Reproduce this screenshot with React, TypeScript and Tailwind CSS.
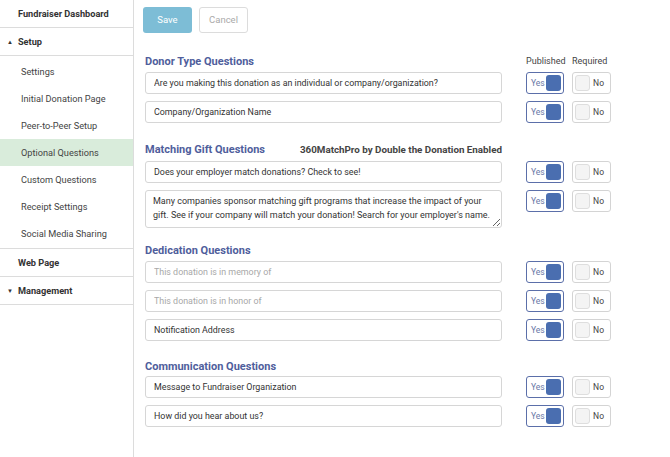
import React from "react";

const font = { fontFamily: "Roboto, 'Liberation Sans', sans-serif" };

const subItems = [
  "Settings",
  "Initial Donation Page",
  "Peer-to-Peer Setup",
  "Optional Questions",
  "Custom Questions",
  "Receipt Settings",
  "Social Media Sharing",
];

function Sidebar() {
  return (
    <aside className="w-[134px] shrink-0 border-r border-[#dcdcdc] min-h-screen text-[9.2px] text-[#333]">
      <div className="h-[28px] flex items-center pl-[18px] font-bold border-b border-[#dcdcdc]">
        Fundraiser Dashboard
      </div>
      <div className="h-[28px] flex items-center pl-[7px] font-bold border-b border-[#dcdcdc]">
        <span className="text-[6px] mr-[5px]">▲</span>Setup
      </div>
      <div className="pt-[2px] pb-[1px] border-b border-[#dcdcdc]">
        {subItems.map((s) => (
          <div
            key={s}
            className={`h-[27px] flex items-center pl-[21px] text-[#444] ${
              s === "Optional Questions" ? "bg-[#d9ecdb]" : ""
            }`}
          >
            {s}
          </div>
        ))}
      </div>
      <div className="h-[28px] flex items-center pl-[18px] font-bold border-b border-[#dcdcdc]">
        Web Page
      </div>
      <div className="h-[28px] flex items-center pl-[7px] font-bold border-b border-[#dcdcdc]">
        <span className="text-[6px] mr-[5px]">▼</span>Management
      </div>
    </aside>
  );
}

function Toggles() {
  return (
    <div className="flex gap-[8px] shrink-0">
      <div className="w-[38px] h-[22px] border border-[#5b6fa9] rounded-[3px] flex items-center justify-between pl-[4px] pr-[2px]">
        <span className="text-[8.5px] text-[#6a78a6]">Yes</span>
        <span className="w-[15px] h-[16px] rounded-[3px] bg-[#4a6eb0]" />
      </div>
      <div className="w-[39px] h-[22px] border border-[#d4d4d4] rounded-[3px] flex items-center justify-between pl-[2px] pr-[6px]">
        <span className="w-[15px] h-[16px] rounded-[3px] bg-[#f4f4f4] border border-[#dedede]" />
        <span className="text-[8.5px] text-[#444]">No</span>
      </div>
    </div>
  );
}

function Row({ value, placeholder }: { value?: string; placeholder?: string }) {
  return (
    <div className="flex items-start gap-[24px]">
      <input
        readOnly
        defaultValue={value}
        placeholder={placeholder}
        className="w-[357px] h-[22px] border border-[#d6d6d6] rounded-[3px] px-[8px] text-[8.9px] text-[#333] placeholder:text-[#a8a8a8] outline-none"
        style={font}
      />
      <Toggles />
    </div>
  );
}

function Heading({ children, right }: { children: React.ReactNode; right?: React.ReactNode }) {
  return (
    <div className="flex items-center h-[16px]">
      <div className="w-[357px] flex items-center justify-between">
        <h2 className="text-[11px] font-bold text-[#4f5e9c]">{children}</h2>
        {right}
      </div>
    </div>
  );
}

export default function App() {
  return (
    <div className="flex bg-white min-h-screen" style={font}>
      <Sidebar />
      <main className="flex-1 pl-[9px]">
        <div className="flex gap-[7px] mt-[7px]">
          <button className="w-[49px] h-[26px] rounded-[3px] bg-[#7dbdd6] text-white text-[9.5px]">Save</button>
          <button className="w-[49px] h-[26px] rounded-[3px] border border-[#dcdcdc] text-[#aaa] text-[9.5px]">Cancel</button>
        </div>

        <div className="pl-[2px]">
          <div className="mt-[21px] flex items-center h-[16px]">
            <div className="w-[357px]">
              <h2 className="text-[11px] font-bold text-[#4f5e9c]">Donor Type Questions</h2>
            </div>
            <div className="flex ml-[24px] text-[9px] text-[#444]">
              <span className="w-[46px]">Published</span>
              <span>Required</span>
            </div>
          </div>
          <div className="mt-[2px] flex flex-col gap-[7px]">
            <Row value="Are you making this donation as an individual or company/organization?" />
            <Row value="Company/Organization Name" />
          </div>

          <div className="mt-[19px]">
            <Heading
              right={
                <span className="text-[9.8px] font-bold text-[#444]">
                  360MatchPro by Double the Donation Enabled
                </span>
              }
            >
              Matching Gift Questions
            </Heading>
          </div>
          <div className="mt-[3px] flex flex-col gap-[7px]">
            <Row value="Does your employer match donations? Check to see!" />
            <div className="flex items-start gap-[24px]">
              <textarea
                readOnly
                defaultValue="Many companies sponsor matching gift programs that increase the impact of your gift. See if your company will match your donation! Search for your employer's name."
                className="w-[357px] h-[38px] border border-[#d6d6d6] rounded-[3px] pl-[7px] pr-[5px] py-[3px] text-[9px] leading-[14px] text-[#333] outline-none resize-y"
                style={font}
              />
              <Toggles />
            </div>
          </div>

          <div className="mt-[15px]">
            <Heading>Dedication Questions</Heading>
          </div>
          <div className="mt-[2px] flex flex-col gap-[7px]">
            <Row placeholder="This donation is in memory of" />
            <Row placeholder="This donation is in honor of" />
            <Row value="Notification Address" />
          </div>

          <div className="mt-[18px]">
            <Heading>Communication Questions</Heading>
          </div>
          <div className="mt-[1px] flex flex-col gap-[7px]">
            <Row value="Message to Fundraiser Organization" />
            <Row value="How did you hear about us?" />
          </div>
        </div>
      </main>
    </div>
  );
}
